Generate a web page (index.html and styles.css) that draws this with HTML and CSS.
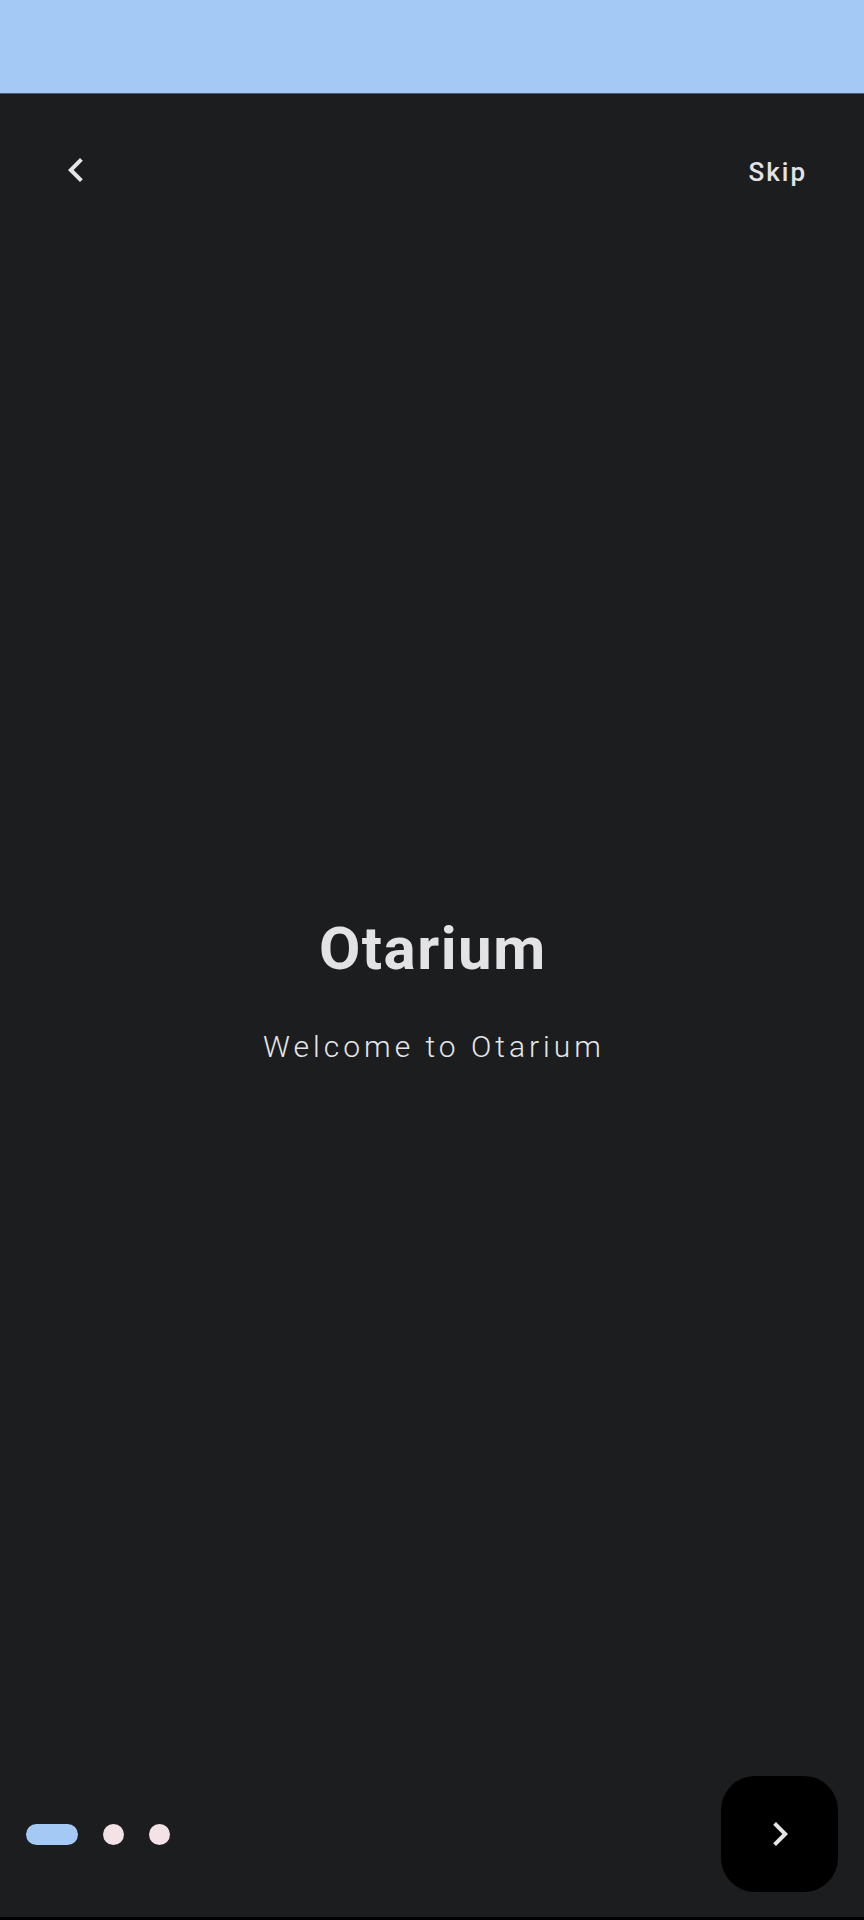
FILE: index.html
```html
<!DOCTYPE html>
<html lang="en">
<head>
<meta charset="utf-8">
<title>Otarium</title>
<link rel="stylesheet" href="styles.css">
</head>
<body>
<div class="screen">
  <div class="status"></div>
  <header class="topbar">
    <button class="icon-btn" aria-label="Back">
      <svg viewBox="0 0 24 24" width="48" height="48"><path d="M15.41 7.41L14 6l-6 6 6 6 1.41-1.41L10.83 12z" fill="currentColor"/></svg>
    </button>
    <span class="skip">Skip</span>
  </header>
  <main class="content">
    <h1 class="title">Otarium</h1>
    <p class="subtitle">Welcome to Otarium</p>
  </main>
  <footer class="bottombar">
    <div class="dots">
      <span class="dot active"></span>
      <span class="dot"></span>
      <span class="dot"></span>
    </div>
    <button class="next" aria-label="Next">
      <svg viewBox="0 0 24 24" width="48" height="48"><path d="M8.59 16.59L10 18l6-6-6-6-1.41 1.41L13.17 12z" fill="currentColor"/></svg>
    </button>
  </footer>
  <div class="navstrip"></div>
</div>
</body>
</html>
```
FILE: styles.css
```css
* { box-sizing: border-box; }
html, body { margin: 0; padding: 0; }
body {
  width: 864px;
  height: 1920px;
  background: #1c1d1f;
  font-family: Roboto, "Noto Sans", sans-serif;
  overflow: hidden;
}
.screen {
  display: flex;
  flex-direction: column;
  height: 1920px;
}
.status {
  height: 94px;
  background: #a4c9f4;
  border-bottom: 1px solid #4c5c72;
  flex: none;
}
.topbar {
  height: 152px;
  display: flex;
  align-items: center;
  justify-content: space-between;
  padding: 0 57px 0 52px;
  flex: none;
}
.icon-btn {
  width: 48px;
  height: 48px;
  padding: 0;
  border: 0;
  background: none;
  color: #e6e6e8;
  display: flex;
}
.skip {
  color: #e3e3e6;
  font-size: 26px;
  font-weight: 500;
  line-height: 32px;
  letter-spacing: 2px;
  margin-top: 4px;
}
.content {
  flex: 1;
  display: flex;
  flex-direction: column;
  align-items: center;
  padding-top: 667px;
}
.title {
  margin: 0;
  font-size: 60px;
  line-height: 72px;
  font-weight: 700;
  color: #e3e3e6;
  letter-spacing: 1.5px;
  padding-left: 1.5px;
}
.subtitle {
  margin: 42px 0 0;
  font-size: 30px;
  line-height: 40px;
  font-weight: 300;
  color: #e6e6e9;
  letter-spacing: 4px;
  padding-left: 4px;
}
.bottombar {
  flex: none;
  display: flex;
  align-items: center;
  justify-content: space-between;
  padding: 0 26px 25px 26px;
}
.dots {
  display: flex;
  align-items: center;
  gap: 25px;
}
.dot {
  width: 21px;
  height: 21px;
  border-radius: 50%;
  background: #f3e3e6;
}
.dot.active {
  width: 52px;
  border-radius: 11px;
  background: #a4c9f4;
}
.next {
  width: 117px;
  height: 116px;
  border-radius: 34px;
  border: 0;
  padding: 0;
  background: #000;
  color: #e6e6e8;
  display: flex;
  align-items: center;
  justify-content: center;
}
.navstrip {
  height: 3px;
  background: #000;
  flex: none;
}
```
